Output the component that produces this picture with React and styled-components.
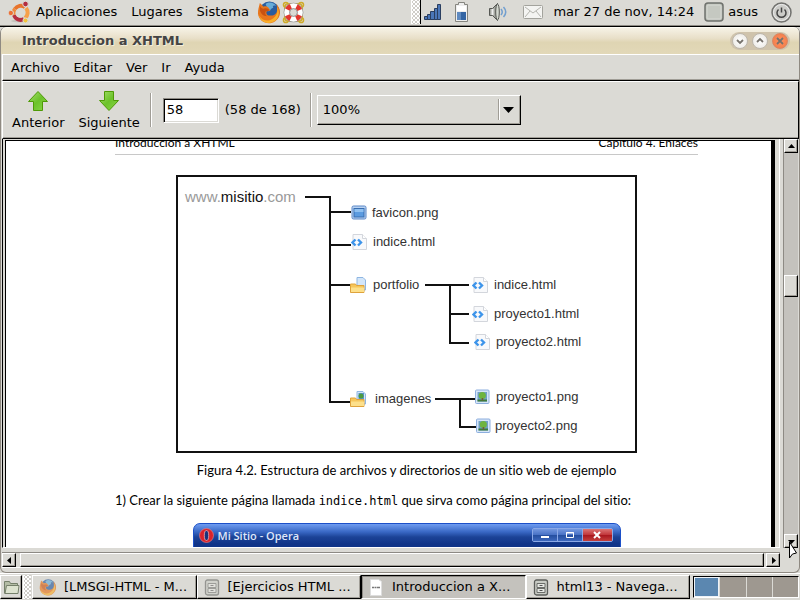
import React from "react";
import styled, { createGlobalStyle, css } from "styled-components";

const gray = "#dbdad5";
const ui = `"DejaVu Sans", sans-serif`;
const doc = `"Lato", sans-serif`;

const Global = createGlobalStyle`
  *, *::before, *::after { box-sizing: border-box; }
  html, body { margin: 0; padding: 0; height: 100%; overflow: hidden; }
  #root { height: 100%; }
  button, input, select { font: inherit; color: inherit; margin: 0; padding: 0; }
  button { border: 0; background: none; }
  svg { display: block; flex: none; }
`;

const raised = css`
  border: 1px solid;
  border-color: #fff #000 #000 #fff;
  box-shadow: inset -1px -1px 0 #a09d96;
  background: ${gray};
`;

const Desktop = styled.div`
  position: relative;
  height: 100vh;
  display: flex;
  flex-direction: column;
  background: ${gray};
  color: #000;
  font-family: ${ui};
  font-size: 13px;
  line-height: 16px;
  overflow: hidden;
`;

const Panel = styled.header`
  display: flex;
  flex: none;
  height: 27px;
  justify-content: space-between;
  border-bottom: 1px solid #000;
  box-shadow: inset 0 -1px 0 #8d8a84;
  padding: 0 8px;
`;
const PanelGroup = styled.div`
  display: flex;
  align-items: center;
  height: 24px;
`;
const PanelMenus = styled.nav`
  display: flex;
  gap: 14px;
  margin: 0 8px 0 6px;
`;
const PanelButton = styled.button`
  display: flex;
  align-items: center;
  gap: 4px;
  white-space: nowrap;
`;
const Launchers = styled.div`
  display: flex;
  gap: 2px;
`;
const Grip = styled.div`
  width: ${(p) => p.$w}px;
  height: 24px;
  flex: none;
  border-left: 1px solid #fff;
  border-right: ${(p) => (p.$edge ? "1px solid #000" : "0")};
  background: radial-gradient(circle, #fff 1px, transparent 1px) 0 0 / 4px 4px,
    radial-gradient(circle, #fff 1px, transparent 1px) 2px 2px / 4px 4px, #cfcdc8;
`;
const Tray = styled.div`
  display: flex;
  align-items: center;
  gap: 14px;
  margin: 0 10px 0 3px;
`;
const Clock = styled.time`
  margin-right: 10px;
  white-space: nowrap;
`;
const UserButton = styled(PanelButton)`
  margin-right: 13px;
`;

const Window = styled.main`
  display: flex;
  flex: 1;
  min-height: 0;
  flex-direction: column;
  border: solid #8f8a82;
  border-width: 0 1px 1px;
  border-radius: 6px;
  background: ${gray};
`;
const TitleBar = styled.div`
  display: flex;
  flex: none;
  height: 27px;
  align-items: center;
  justify-content: space-between;
  padding: 0 9px 0 21px;
  border-radius: 6px 6px 0 0;
  border-top: 1px solid #fffdf5;
  background: linear-gradient(#f6f2e6, #e8dfc8 40%, #dfd5b3 55%, #e2d8b8);
`;
const Title = styled.h1`
  margin: 0;
  font-size: 13px;
  color: #444;
  text-shadow: 1px 1px 0 #f4eedb;
`;
const WindowButtons = styled.div`
  display: flex;
  gap: 4px;
  padding: 1px 2px;
  border-radius: 9px;
  background: #cfc3ac;
`;
const RoundButton = styled.button`
  && {
    display: grid;
    place-items: center;
    width: 16px;
    height: 16px;
    border-radius: 50%;
    border: 1px solid ${(p) => (p.$close ? "#d98663" : "#bdb7ac")};
    background: ${(p) =>
      p.$close ? "radial-gradient(#ff9363, #f07843)" : "radial-gradient(#fff, #e8e5df)"};
  }
`;
const MenuBar = styled.nav`
  display: flex;
  flex: none;
  align-items: center;
  gap: 14px;
  height: 27px;
  margin-left: 1px;
  padding: 0 8px;
  border-top: 1px solid #fff;
  border-left: 1px solid #fff;
  border-bottom: 1px solid #000;
  box-shadow: inset 0 -1px 0 #a09d96;
`;
const ToolBar = styled.div`
  display: flex;
  flex: none;
  align-items: center;
  height: 58px;
  margin-left: 1px;
  padding-left: 9px;
  border-top: 1px solid #fff;
  border-left: 1px solid #fff;
  border-right: 1px solid #000;
  border-bottom: 1px solid #000;
  box-shadow: inset 0 -1px 0 #a09d96;
`;
const ToolButtons = styled.div`
  display: flex;
  gap: 14px;
  margin-right: 10px;
`;
const ToolButton = styled.button`
  display: flex;
  flex-direction: column;
  align-items: center;
  gap: 3px;
`;
const Separator = styled.div`
  width: 2px;
  height: 34px;
  margin-right: ${(p) => p.$gap}px;
  border-left: 1px solid #a09d96;
  border-right: 1px solid #fff;
`;
const PageInput = styled.input`
  && {
    width: 56px;
    height: 25px;
    padding: 0 3px 2px;
    border: 1px solid;
    border-color: #8d8a84 #fff #fff #8d8a84;
    border-radius: 0;
    box-shadow: inset 1px 1px 0 #000, inset -1px -1px 0 ${gray};
    background: #fff;
    outline: 0;
  }
`;
const PageCount = styled.label`
  margin: 0 9px 0 6px;
  white-space: nowrap;
`;
const Zoom = styled.div`
  position: relative;
  width: 204px;
  height: 30px;
  svg {
    position: absolute;
    right: 7px;
    top: 4px;
    pointer-events: none;
  }
`;
const ZoomSelect = styled.select`
  && {
    ${raised}
    appearance: none;
    width: 100%;
    height: 100%;
    padding: 0 5px;
    border-radius: 0;
  }
`;

const Body = styled.div`
  display: flex;
  flex: 1;
  min-height: 0;
`;
const Viewer = styled.div`
  display: flex;
  flex: 1;
  min-width: 0;
  margin: 0 3px 4px 1px;
  padding: 1px 4px 0 2px;
  border-left: 1px solid #000;
  border-right: 1px solid #fff;
  border-bottom: 1px solid #fff;
`;
const Page = styled.article`
  flex: 1;
  min-width: 0;
  overflow: hidden;
  padding: 0 73px 0 109px;
  border-left: 1px solid #000;
  border-top: 1px solid #000;
  border-right: 4px solid #000;
  background: #fff;
  font-family: ${doc};
  font-size: 13px;
  font-variant-ligatures: none;
`;
const PageHeader = styled.div`
  display: flex;
  align-items: flex-end;
  justify-content: space-between;
  height: 14px;
  padding-bottom: 3px;
  border-bottom: 1px solid #c8c8c8;
  font-size: 12px;
`;
const Figure = styled.figure`
  margin: 20px 0 14px;
`;
const Diagram = styled.div`
  position: relative;
  width: 461px;
  height: 278px;
  margin: 0 auto;
  border: 2px solid #111;
  color: #333;
  font: 13px/16px "Liberation Sans", sans-serif;
`;
const Site = styled.div`
  position: absolute;
  left: 7px;
  top: 12px;
  font-size: 15px;
  color: #999;
  b { font-weight: 400; color: #111; }
`;
const Node = styled.div`
  position: absolute;
  left: ${(p) => p.$x}px;
  top: ${(p) => p.$y}px;
  display: flex;
  gap: ${(p) => p.$gap}px;
  white-space: nowrap;
`;
const Caption = styled.figcaption`
  margin-top: 9px;
  text-align: center;
`;
const Paragraph = styled.p`
  margin: 0;
  white-space: nowrap;
  code { font: 12px/16px "DejaVu Sans Mono", monospace; }
`;
const Opera = styled.div`
  width: 428px;
  margin: 14px auto 0;
  height: 40px;
  display: flex;
  align-items: flex-start;
  justify-content: space-between;
  padding: 4px 7px 0 5px;
  border: 1px solid #1c50c8;
  border-radius: 7px 7px 0 0;
  background: linear-gradient(#6f9cf0, #3867c4 8px, #1c4397 13px, #103488 20px, #103488 23px, #e4e4e4 24px);
`;
const OperaTitle = styled.div`
  display: flex;
  align-items: center;
  gap: 4px;
  color: #dfe7fa;
  font: 600 11px/14px "Open Sans", sans-serif;
`;
const OperaButtons = styled.div`
  display: flex;
  border: 1px solid #8ba8e6;
  border-radius: 2px;
`;
const OperaButton = styled.button`
  && {
    display: grid;
    place-items: center;
    width: ${(p) => (p.$close ? 29 : 25)}px;
    height: 12px;
    border-right: ${(p) => (p.$close ? "0" : "1px solid #8ba8e6")};
    background: ${(p) =>
      p.$close
        ? "linear-gradient(#dc7474, #c03438 50%, #a8161e 51%, #c4403c)"
        : "linear-gradient(#7397df, #4770c4 50%, #244d9e 51%, #3d68bd)"};
  }
`;

const VScroll = styled.div`
  display: flex;
  flex-direction: column;
  width: 15px;
  margin: 0 1px 4px 0;
  border-left: 1px solid #8d8a84;
  background: #c4c2bd;
`;
const ScrollButton = styled.button`
  && {
    ${raised}
    display: grid;
    place-items: center;
    width: 14px;
    height: 14px;
    flex: none;
  }
`;
const VTrack = styled.div`
  display: grid;
  grid-template-rows: 122fr 22px 236fr;
  flex: 1;
`;
const Thumb = styled.div`
  ${raised}
`;
const VThumb = styled(Thumb)`
  grid-row: 2;
  width: 14px;
`;
const HScroll = styled.div`
  display: flex;
  flex: none;
  height: 16px;
  gap: 2px;
  margin: 0 19px 4px 1px;
  border-top: 1px solid #8d8a84;
  border-bottom: 1px solid #fff;
`;
const HThumb = styled(Thumb)`
  flex: 1;
  margin-left: 2px;
`;

const TaskBar = styled.footer`
  display: flex;
  flex: none;
  height: 27px;
  padding: 1px 1px 1px 0;
  border-top: 1px solid #fff;
`;
const DesktopButton = styled.button`
  && {
    ${raised}
    display: grid;
    place-items: center;
    width: 22px;
    margin-right: 1px;
  }
`;
const Tasks = styled.div`
  display: flex;
  flex: 1;
  min-width: 0;
  margin: 0 3px 0 1px;
`;
const Task = styled.button`
  && {
    ${raised}
    display: flex;
    flex: 1;
    align-items: center;
    gap: 8px;
    min-width: 0;
    padding: 0 6px;
    overflow: hidden;
    white-space: nowrap;
    ${(p) =>
      p.$active &&
      css`
        background: #c4c2bd;
        border-color: #000 #fff #fff #000;
        box-shadow: inset 1px 1px 0 #8d8a84;
      `}
  }
`;
const Pager = styled.div`
  display: grid;
  grid-template-columns: repeat(4, 1fr);
  gap: 1px;
  width: 106px;
  height: 22px;
  margin-top: 1px;
  border: 1px solid #000;
  border-right-color: #fff;
  border-bottom-color: #fff;
  background: ${gray};
`;
const Workspace = styled.button`
  && {
    background: ${(p) => (p.$current ? "#5b87b0" : "#9e9890")};
    border: ${(p) => (p.$current ? "1px solid #eef3f8" : "0")};
  }
`;
const Pointer = styled.svg`
  position: absolute;
  right: 3px;
  bottom: 40px;
`;

const Ubuntu = () => (
  <svg width="22" height="22" viewBox="0 0 22 22">
    <ellipse cx="12" cy="20" rx="9" ry="1.5" fill="#c4c2bd" />
    <g fill="none" strokeWidth="4">
      <path d="M7 8A7 7 0 0 1 17 6" stroke="#e8742c" />
      <path d="M18 7A7 7 0 0 1 17 17" stroke="#f6a04a" />
      <path d="M16 18A7 7 0 0 1 6 14" stroke="#b63042" />
      <path d="M6 14A7 7 0 0 1 7 8" stroke="#f08a3c" />
    </g>
    <circle cx="12" cy="12" r="4.6" fill={gray} />
    <g stroke={gray}>
      <circle cx="2.8" cy="12" r="2.7" fill="#ed7136" />
      <circle cx="17.5" cy="3" r="2.8" fill="#b32c40" />
      <circle cx="17.5" cy="19.5" r="2.5" fill="#f2c43b" />
    </g>
  </svg>
);
const Firefox = ({ size = 23, faded }) => (
  <svg width={size} height={size} viewBox="0 0 24 24" opacity={faded ? 0.65 : 1}>
    <circle cx="13" cy="11" r="10.5" fill="#2a5c9e" />
    <path d="M9 3c4-3 9-1 11 2-3-1-4 0-3 2-3 1-3 3-5 4z" fill="#68acd8" />
    <path d="M3 2 7 6c2-1 4 0 5 1l2 3-4 1c-1 3 2 5 5 4 3 0 6-2 6-6 0-2 0-4-1-6 6 6 5 14-1 18-7 5-17 1-18-8 0-4 1-7 2-11z" fill="#e8761c" />
    <path d="M21 6c4 7 1 16-8 17C7 23 3 19 2 15c4 6 10 7 15 3 4-3 5-7 4-12z" fill="#f9b02b" />
    <path d="M3 5c1 2 2 3 4 3 3-1 5 0 6 2l-4 1c-1 2 0 4 2 5-5 0-7-3-8-6z" fill="#c95211" />
  </svg>
);
const Lifesaver = () => (
  <svg width="23" height="23" viewBox="0 0 24 24">
    <g fill="none" stroke="#cfaa28" strokeWidth="1.5">
      <rect x="3" y="3" width="18" height="18" rx="3" />
      <circle cx="4" cy="4" r="2.5" /><circle cx="20" cy="4" r="2.5" />
      <circle cx="4" cy="20" r="2.5" /><circle cx="20" cy="20" r="2.5" />
    </g>
    <circle cx="12" cy="12" r="7" fill="none" stroke="#8c8b88" strokeWidth="6.6" />
    <circle cx="12" cy="12" r="7" fill="none" stroke="#fff" strokeWidth="5.4" />
    <circle cx="12" cy="12" r="7" fill="none" stroke="#e3352c" strokeWidth="5.4" strokeDasharray="5 6" strokeDashoffset="-3" />
    <circle cx="12" cy="12" r="4" fill={gray} stroke="#999" />
  </svg>
);
const Signal = () => (
  <svg width="18" height="18" viewBox="0 0 18 18">
    <g fill="#4a76b8" stroke="#2b3f60">
      <path d="M.5 13.500h3v3h-3zM3.500 11.500h3v5h-3zM6.500 8.500h4v8h-4zM10.500 5.500h3v11h-3zM13.500 1.500h3v15h-3z" />
    </g>
  </svg>
);
const Battery = () => (
  <svg width="18" height="21" viewBox="2 0 18 21">
    <path d="M4.500 2.500v-2h6v2h3v17h-12v-17z" fill="#eee" stroke="#85857f" />
    <path d="M3 10h9v8H3z" fill="#3465a4" /><path d="M3 10h4v8H3z" fill="#5f8ac0" />
    <path d="M3 4h9v5H3z" fill="#fff" />
  </svg>
);
const BatteryBox = styled.span`
  svg { overflow: visible; }
`;
const Speaker = () => (
  <svg width="21" height="20" viewBox="0 0 21 20">
    <path d="M1.500 6.500h3l5-5v17l-5-5h-3z" fill="#a4a6a0" stroke="#555753" />
    <ellipse cx="9.500" cy="10" rx="1.800" ry="8" fill="#d3d7cf" stroke="#555753" />
    <path d="M4.500 7v6" stroke="#eee" strokeWidth="2" />
    <path d="M13 7q2.500 3 0 6M15.500 5q4.500 5 0 10" fill="none" stroke="#729fcf" strokeWidth="1.500" />
  </svg>
);
const Mail = () => (
  <svg width="20" height="16" viewBox="0 0 20 16">
    <rect x=".5" y="1.500" width="19" height="13" rx="1" fill="#f4f4f2" stroke="#a3a39d" />
    <path d="M2 3l8 6 8-6M2 13l5-6M18 13l-5-6" fill="none" stroke="#b4b4af" />
  </svg>
);
const UserIcon = () => (
  <svg width="20" height="20" viewBox="0 0 20 20">
    <rect x="1" y="1" width="18" height="18" rx="3" fill="#babdb6" stroke="#6f716d" strokeWidth="1.500" />
    <rect x="3" y="3" width="14" height="14" rx="1" fill="#c5c8c1" stroke="#d8dad5" />
  </svg>
);
const Power = () => (
  <svg width="21" height="21" viewBox="0 0 21 21">
    <circle cx="10.500" cy="10.500" r="9.500" fill="#bdbdb9" stroke="#737370" strokeWidth="1.500" />
    <circle cx="10.500" cy="10.500" r="8" fill="#ccccc8" stroke="#eee" />
    <path d="M7.500 7.500a4.500 4.500 0 1 0 6 0M10.500 5.500v5" fill="none" stroke="#444" strokeWidth="1.500" />
  </svg>
);
const GreenArrow = ({ down }) => (
  <svg width="22" height="22" viewBox="0 0 22 22">
    <defs>
      <linearGradient id={down ? "gd" : "gu"} x1="0" x2="1" y1="0" y2="1">
        <stop offset="0" stopColor="#a8e070" /><stop offset=".5" stopColor="#6cc22a" /><stop offset="1" stopColor="#8ad84a" />
      </linearGradient>
    </defs>
    <path
      d={down ? "M6.500 1.500h9v9h5l-9.500 10-9.500-10h5z" : "M11 1.500l9.500 10h-5v9h-9v-9h-5z"}
      fill={`url(#${down ? "gd" : "gu"})`} stroke="#4e9a06"
    />
  </svg>
);
const arrows = { up: "M1 6h7L4.500 2z", down: "M1 3h7L4.500 7z", left: "M6 1v7L2 4.500z", right: "M3 1v7l4-3.500z" };
const Triangle = ({ dir }) => (
  <svg width="9" height="9" viewBox="0 0 9 9"><path d={arrows[dir]} /></svg>
);
const Glyph = ({ d }) => (
  <svg width="10" height="10" viewBox="0 0 10 10">
    <path d={d} fill="none" stroke="#76726c" strokeWidth="1.800" />
  </svg>
);

const FileIcon = ({ kind }) => (
  <svg width="16" height="16" viewBox="0 0 16 16">
    {kind === "image" && (
      <>
        <rect x="1" y="1" width="14" height="13" rx="1.500" fill="#b8d2f2" stroke="#5b87c6" />
        <rect x="3" y="3.500" width="10" height="8.500" fill="#5b9be0" stroke="#386db0" />
        <path d="M3.500 4h9v3h-9z" fill="#8fc0f0" />
      </>
    )}
    {kind === "html" && (
      <>
        <path d="M2 .5h9.500l4 4v11H2z" fill="#f8f9fb" stroke="#d3d6dc" />
        <path d="M11.500.5v4h4" fill="#fff" stroke="#d3d6dc" />
        <path d="M4.500 5.500L1.500 8.500l3 3M7 5.500l3 3-3 3" fill="none" stroke="#3d94ea" strokeWidth="2.400" />
      </>
    )}
    {(kind === "folder" || kind === "pictures") && (
      <>
        <path d="M7 .5h6l2.500 2.500v10H7z" fill="#d3e6fa" stroke="#8fb6e2" />
        {kind === "pictures" && <><path d="M8.500 2h5.500v7H8.500z" fill="#5b94cc" /><circle cx="11" cy="5" r="2.500" fill="#4d9b41" /></>}
        <path d="M.5 7h5l1 1.500h7.500v7H.5z" fill="#f6c65b" stroke="#dfa33c" />
        <path d="M1 10.500h13v4.500H1z" fill="#fde08b" />
      </>
    )}
    {kind === "photo" && (
      <>
        <rect x=".5" y="1" width="13.500" height="13.500" rx="1" fill="#d6e5f7" stroke="#8caede" />
        <path d="M2.500 3h9.500v9.500H2.500z" fill="#6f9fc8" />
        <path d="M2.500 10.500h9.500v2H2.500z" fill="#3f7c3a" />
        <circle cx="7.300" cy="6.500" r="3.600" fill="#6eb43f" /><path d="M6.700 9h1.500v2.500H6.700z" fill="#765b33" />
      </>
    )}
  </svg>
);
const OperaLogo = () => (
  <svg width="15" height="15" viewBox="0 0 15 15">
    <circle cx="7.500" cy="7.500" r="7" fill="#d9232b" stroke="#f08a8a" strokeWidth=".6" />
    <ellipse cx="7.500" cy="7.500" rx="2.200" ry="5" fill="#17337c" stroke="#ffc0c0" strokeWidth=".7" />
  </svg>
);
const FolderOpen = () => (
  <svg width="17" height="17" viewBox="0 0 17 17">
    <path d="M1.500 14.500v-12h5l1 2h7v3" fill="#b4bda5" stroke="#75806a" />
    <path d="M2 14.500l1.500-8h12.500l-1 8z" fill="#dde3cf" stroke="#75806a" />
  </svg>
);
const Cabinet = ({ faded }) => (
  <svg width="16" height="17" viewBox="0 0 16 17" opacity={faded ? 0.55 : 1}>
    <rect x="1.500" y="1" width="13" height="15" rx="2" fill="#c9ccc5" stroke="#5c5e5a" strokeWidth="1.300" />
    <path d="M4 4.500h8v4H4zM4 9.500h8v4H4z" fill="#e6e8e3" stroke="#6b6d69" />
    <path d="M6.500 6.500h3M6.500 11.500h3" stroke="#555" />
  </svg>
);
const PageIcon = () => (
  <svg width="16" height="17" viewBox="0 0 16 17">
    <path d="M2.500.5h8l3 2v14h-11z" fill="#fff" stroke="#ddd" />
    <path d="M4 8.500h2m.5 0h2m.5 0h3" stroke="#777" strokeWidth="1.500" />
  </svg>
);

const nodes = [
  ["image", "favicon.png", 173, 28, 5],
  ["html", "indice.html", 173, 57, 6],
  ["folder", "portfolio", 172, 100, 7],
  ["pictures", "imagenes", 172, 214, 9],
  ["html", "indice.html", 294, 100, 6],
  ["html", "proyecto1.html", 294, 129, 6],
  ["html", "proyecto2.html", 296, 157, 6],
  ["photo", "proyecto1.png", 297, 212, 5],
  ["photo", "proyecto2.png", 298, 241, 3],
];

const tasks = [
  { icon: <Firefox size={17} faded />, text: "[LMSGI-HTML - M..." },
  { icon: <Cabinet faded />, text: "[Ejercicios HTML ..." },
  { icon: <PageIcon />, text: "Introduccion a X...", active: true },
  { icon: <Cabinet />, text: "html13 - Navega..." },
];

export default function App() {
  return (
    <Desktop>
      <Global />
      <Panel>
        <PanelGroup>
          <Ubuntu />
          <PanelMenus>
            {["Aplicaciones", "Lugares", "Sistema"].map((m) => <PanelButton key={m}>{m}</PanelButton>)}
          </PanelMenus>
          <Launchers>
            <PanelButton aria-label="Firefox"><Firefox /></PanelButton>
            <PanelButton aria-label="Ayuda"><Lifesaver /></PanelButton>
          </Launchers>
        </PanelGroup>
        <PanelGroup>
          <Grip $w={10} $edge />
          <Tray><Signal /><BatteryBox><Battery /></BatteryBox><Speaker /><Mail /></Tray>
          <Clock>mar 27 de nov, 14:24</Clock>
          <UserButton><UserIcon />asus</UserButton>
          <PanelButton aria-label="Apagar"><Power /></PanelButton>
        </PanelGroup>
      </Panel>

      <Window>
        <TitleBar>
          <Title>Introduccion a XHTML</Title>
          <WindowButtons>
            <RoundButton aria-label="Minimizar"><Glyph d="M2 4l3 3 3-3" /></RoundButton>
            <RoundButton aria-label="Maximizar"><Glyph d="M2 6l3-3 3 3" /></RoundButton>
            <RoundButton aria-label="Cerrar" $close><Glyph d="M2 2l6 6M8 2L2 8" /></RoundButton>
          </WindowButtons>
        </TitleBar>
        <MenuBar>
          {["Archivo", "Editar", "Ver", "Ir", "Ayuda"].map((m) => <PanelButton key={m}>{m}</PanelButton>)}
        </MenuBar>
        <ToolBar>
          <ToolButtons>
            <ToolButton><GreenArrow />Anterior</ToolButton>
            <ToolButton><GreenArrow down />Siguiente</ToolButton>
          </ToolButtons>
          <Separator $gap={11} />
          <PageInput id="page" defaultValue="58" />
          <PageCount htmlFor="page">(58 de 168)</PageCount>
          <Separator $gap={5} />
          <Zoom>
            <ZoomSelect aria-label="Zoom" defaultValue="100%"><option>100%</option></ZoomSelect>
            <svg width="16" height="21" viewBox="0 0 16 21">
              <path d="M.5 0v21" stroke="#a09d96" /><path d="M1.500 0v21" stroke="#fff" />
              <path d="M5 8h11l-5.500 6z" />
            </svg>
          </Zoom>
        </ToolBar>
        <Body>
          <Viewer>
            <Page>
              <PageHeader><span>Introducción a XHTML</span><span>Capítulo 4. Enlaces</span></PageHeader>
              <Figure>
                <Diagram>
                  <svg width="457" height="274" viewBox="178 177 457 274">
                    <path
                      d="M305 197h25v205h21M330 212h21M330 245h21M330 285h21M425 285h44M450 285v58h19M450 314h19M435 399h40M460 399v28h16"
                      fill="none" stroke="#111" strokeWidth="2"
                    />
                  </svg>
                  <Site>www.<b>misitio</b>.com</Site>
                  {nodes.map(([kind, name, x, y, gap]) => (
                    <Node key={x + "-" + y} $x={x} $y={y} $gap={gap}><FileIcon kind={kind} />{name}</Node>
                  ))}
                </Diagram>
                <Caption>Figura 4.2. Estructura de archivos y directorios de un sitio web de ejemplo</Caption>
              </Figure>
              <Paragraph>
                1) Crear la siguiente página llamada <code>indice.html</code> que sirva como página principal del sitio:
              </Paragraph>
              <Opera>
                <OperaTitle><OperaLogo />Mi Sitio - Opera</OperaTitle>
                <OperaButtons>
                  <OperaButton aria-label="Minimizar"><svg width="10" height="8"><path d="M1 6h8" stroke="#fff" strokeWidth="2" /></svg></OperaButton>
                  <OperaButton aria-label="Maximizar"><svg width="10" height="8"><path d="M1.500 1.500h7v5h-7zM1 2h8" fill="none" stroke="#fff" /></svg></OperaButton>
                  <OperaButton aria-label="Cerrar" $close><svg width="10" height="8"><path d="M2 1l6 6M8 1L2 7" stroke="#fff" strokeWidth="2" /></svg></OperaButton>
                </OperaButtons>
              </Opera>
            </Page>
          </Viewer>
          <VScroll>
            <ScrollButton aria-label="Subir"><Triangle dir="up" /></ScrollButton>
            <VTrack><VThumb /></VTrack>
            <ScrollButton aria-label="Bajar"><Triangle dir="down" /></ScrollButton>
          </VScroll>
        </Body>
        <HScroll>
          <ScrollButton aria-label="Izquierda"><Triangle dir="left" /></ScrollButton>
          <HThumb />
          <ScrollButton aria-label="Derecha"><Triangle dir="right" /></ScrollButton>
        </HScroll>
      </Window>

      <TaskBar>
        <DesktopButton aria-label="Escritorio"><FolderOpen /></DesktopButton>
        <Grip $w={8} />
        <Tasks>
          {tasks.map((t) => <Task key={t.text} $active={t.active}>{t.icon}{t.text}</Task>)}
        </Tasks>
        <Pager>
          {[1, 2, 3, 4].map((n) => <Workspace key={n} $current={n === 1} aria-label={`Área de trabajo ${n}`} />)}
        </Pager>
      </TaskBar>
      <Pointer width="9" height="19" viewBox="0 0 9 19">
        <path d="M1.500 1v16l3-4 4-1z" fill="#fff" stroke="#000" />
      </Pointer>
    </Desktop>
  );
}
